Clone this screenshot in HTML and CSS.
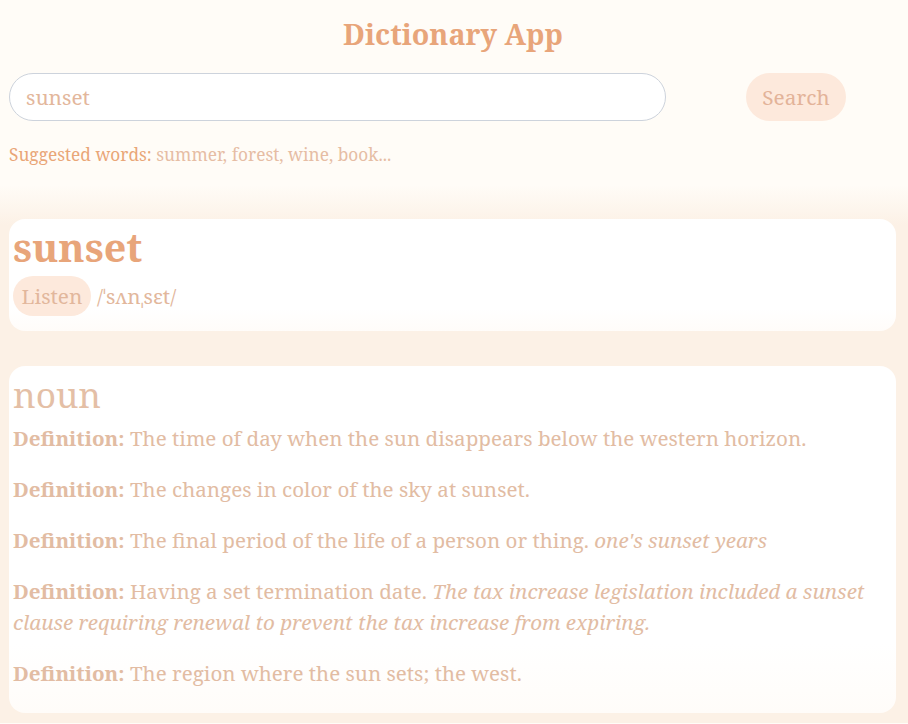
FILE: index.html
```html
<!DOCTYPE html>
<html lang="en">
<head>
<meta charset="utf-8">
<title>Dictionary App</title>
<link rel="stylesheet" href="styles.css">
</head>
<body>
<div class="app">
  <header class="top">
    <h1 class="title">Dictionary App</h1>
    <form class="search">
      <input class="search-input" type="text" value="sunset">
      <button class="search-btn" type="button">Search</button>
    </form>
    <p class="suggest"><span class="suggest-label">Suggested words:</span> summer, forest, wine, book...</p>
  </header>
  <main class="results">
    <section class="card word-card">
      <h2 class="word">sunset</h2>
      <div class="phon-row">
        <button class="listen" type="button">Listen</button>
        <span class="phonetic">/ˈsʌnˌsɛt/</span>
      </div>
    </section>
    <section class="card meaning-card">
      <h3 class="pos">noun</h3>
      <p class="def"><strong>Definition:</strong> The time of day when the sun disappears below the western horizon.</p>
      <p class="def"><strong>Definition:</strong> The changes in color of the sky at sunset.</p>
      <p class="def"><strong>Definition:</strong> The final period of the life of a person or thing. <em>one's sunset years</em></p>
      <p class="def"><strong>Definition:</strong> Having a set termination date. <em>The tax increase legislation included a sunset clause requiring renewal to prevent the tax increase from expiring.</em></p>
      <p class="def"><strong>Definition:</strong> The region where the sun sets; the west.</p>
    </section>
  </main>
</div>
</body>
</html>
```

FILE: styles.css
```css
* { box-sizing: border-box; }
html, body { margin: 0; padding: 0; }
body {
  background: #fffcf7;
  font-family: "Noto Serif", "DejaVu Serif", serif;
  color: #e2bca3;
  overflow: hidden;
}
.app { padding: 0 12px 0 9px; }
.top { padding-top: 14px; }
.title {
  margin: 0;
  text-align: center;
  font-size: 28.6px;
  line-height: 40px;
  font-weight: 700;
  color: #e8a57a;
  padding-left: 1px;
}
.search {
  display: flex;
  align-items: center;
  margin-top: 19px;
}
.search-input {
  width: 657px;
  height: 48px;
  border: 1px solid #cdd3dc;
  border-radius: 24px;
  background: #fff;
  padding: 0 16px;
  font-family: inherit;
  font-size: 20.8px;
  color: #e3b79c;
  outline: none;
}
.search-btn {
  margin-left: 80px;
  width: 100px;
  height: 48px;
  border: none;
  border-radius: 24px;
  background: #fde9dc;
  font-family: inherit;
  font-size: 20.8px;
  color: #e3b399;
  padding: 0;
}
.suggest {
  margin: 22px 0 0;
  font-size: 17.3px;
  line-height: 24px;
  color: #e6bda4;
}
.suggest-label { color: #e9a677; }
.results {
  margin-top: 18px;
  margin-left: -9px;
  margin-right: -12px;
  padding: 34px 12px 10px 9px;
  background: linear-gradient(#fffcf7 0, #fcf1e6 40px, #fcf1e6 100%);
}
.card {
  background: linear-gradient(#ffffff 80%, #fffcf9 100%);
  border-radius: 16px;
  padding: 4px 4px 15px;
}
.word {
  margin: 0;
  font-size: 39.5px;
  line-height: 48px;
  font-weight: 700;
  color: #e8a57a;
}
.phon-row {
  display: flex;
  align-items: center;
  gap: 6px;
  margin-top: 5px;
}
.listen {
  height: 40px;
  width: 78px;
  border: none;
  border-radius: 20px;
  background: #fde9dc;
  font-family: inherit;
  font-size: 20.8px;
  color: #e2b79c;
  padding: 0;
}
.phonetic { font-size: 20.8px; color: #e2b79c; }
.meaning-card { margin-top: 35px; padding-bottom: 24px; }
.pos {
  margin: 0;
  font-size: 35.2px;
  line-height: 48px;
  font-weight: 400;
  color: #e4bfa6;
}
.def {
  margin: 5px 0 20px;
  font-size: 20.6px;
  line-height: 31px;
}
.def:last-child { margin-bottom: 0; }
.def strong { font-weight: 700; }
```
